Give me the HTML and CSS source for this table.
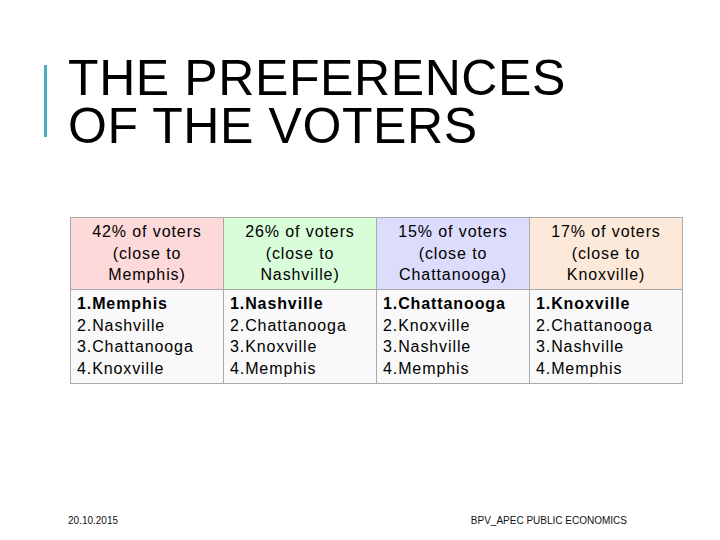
FILE: index.html
```html
<!DOCTYPE html>
<html lang="en">
<head>
<meta charset="utf-8">
<title>The preferences of the voters</title>
<link rel="stylesheet" href="styles.css">
</head>
<body>
<div class="slide">
  <header class="title-row">
    <div class="accent"></div>
    <h1 class="title"><span class="tline">THE PREFERENCES</span><span class="tline">OF THE VOTERS</span></h1>
  </header>
  <table class="prefs">
    <thead>
      <tr>
        <th class="c-mem">42% of voters<br>(close to<br>Memphis)</th>
        <th class="c-nash">26% of voters<br>(close to<br>Nashville)</th>
        <th class="c-chat">15% of voters<br>(close to<br>Chattanooga)</th>
        <th class="c-knox">17% of voters<br>(close to<br>Knoxville)</th>
      </tr>
    </thead>
    <tbody>
      <tr>
        <td><ol><li class="first">1.Memphis</li><li>2.Nashville</li><li>3.Chattanooga</li><li>4.Knoxville</li></ol></td>
        <td><ol><li class="first">1.Nashville</li><li>2.Chattanooga</li><li>3.Knoxville</li><li>4.Memphis</li></ol></td>
        <td><ol><li class="first">1.Chattanooga</li><li>2.Knoxville</li><li>3.Nashville</li><li>4.Memphis</li></ol></td>
        <td><ol><li class="first">1.Knoxville</li><li>2.Chattanooga</li><li>3.Nashville</li><li>4.Memphis</li></ol></td>
      </tr>
    </tbody>
  </table>
  <footer class="footer">
    <span class="date">20.10.2015</span>
    <span class="course">BPV_APEC PUBLIC ECONOMICS</span>
  </footer>
</div>
</body>
</html>
```
FILE: styles.css
```css
html, body {
  margin: 0;
  padding: 0;
  background: #ffffff;
}
.slide {
  width: 720px;
  height: 540px;
  display: flex;
  flex-direction: column;
  font-family: "Liberation Sans", Arial, sans-serif;
  color: #000;
  box-sizing: border-box;
}
.title-row {
  display: flex;
  align-items: flex-start;
  padding: 54px 0 0 44px;
  gap: 21px;
}
.accent {
  width: 3px;
  height: 72px;
  margin-top: 11px;
  background: #4bacc6;
}
.title {
  margin: 0;
  font-weight: normal;
  font-size: 50px;
  line-height: 48px;
  letter-spacing: 0.6px;
  color: #000;
}
.tline {
  display: block;
  height: 48px;
  overflow: visible;
}
.prefs {
  margin: 67px 0 0 70px;
  width: 613px;
  table-layout: fixed;
  border-collapse: collapse;
  font-size: 16px;
  line-height: 21.5px;
  letter-spacing: 0.9px;
}
.prefs th, .prefs td {
  border: 1px solid #aaaaaa;
  padding: 3.25px 6px;
  vertical-align: top;
}
.prefs th {
  font-weight: normal;
  text-align: center;
}
.prefs td {
  background: #f9f9f9;
  text-align: left;
}
.c-mem { background: #fdd9d9; }
.c-nash { background: #d9fdd9; }
.c-chat { background: #dcdcfd; }
.c-knox { background: #fde9d9; }
.prefs ol {
  list-style: none;
  margin: 0;
  padding: 0;
}
.prefs li.first {
  font-weight: bold;
}
.footer {
  margin-top: auto;
  display: flex;
  justify-content: space-between;
  padding: 0 93px 13px 68px;
  font-size: 10px;
  line-height: 12px;
  color: #111;
}
```
